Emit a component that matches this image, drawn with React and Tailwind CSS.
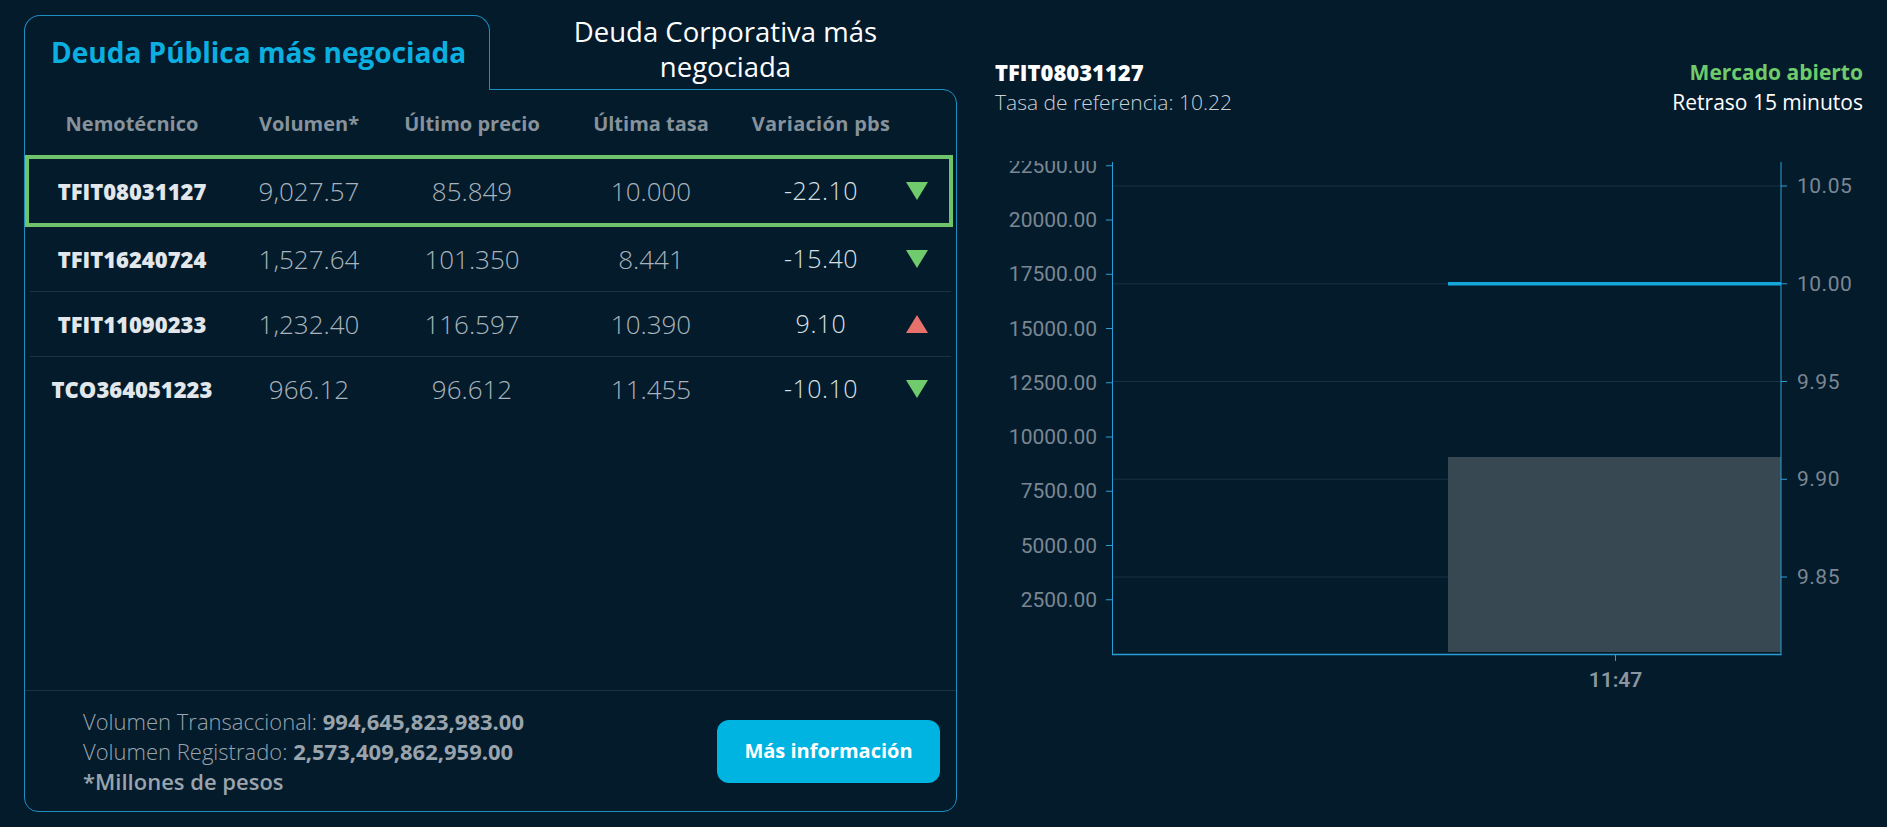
import React from "react";

const rows = [
  { code: "TFIT08031127", vol: "9,027.57", price: "85.849", rate: "10.000", bps: "-22.10", up: false },
  { code: "TFIT16240724", vol: "1,527.64", price: "101.350", rate: "8.441", bps: "-15.40", up: false },
  { code: "TFIT11090233", vol: "1,232.40", price: "116.597", rate: "10.390", bps: "9.10", up: true },
  { code: "TCO364051223", vol: "966.12", price: "96.612", rate: "11.455", bps: "-10.10", up: false },
];

const cols = "grid grid-cols-[214px_140px_186px_172px_168px_24px] items-center text-center";

function Triangle({ up }) {
  return (
    <svg width="24" height="20" viewBox="0 0 24 20">
      {up ? (
        <polygon points="12,1 23,19 1,19" fill="#e8716c" />
      ) : (
        <polygon points="1,1 23,1 12,19" fill="#6fcb6b" />
      )}
    </svg>
  );
}

function Row({ row, selected }) {
  return (
    <div
      className={
        "mr-[3px] border-4 " +
        (selected ? "h-[72px] border-[#6fc46b]" : "h-[64px] border-transparent")
      }
    >
      <div className={cols + " h-full -ml-[4px] whitespace-nowrap"}>
        <div className="font-extrabold text-[22px] text-[#e2e7eb]">{row.code}</div>
        <div className="font-light text-[26px] text-[#a9b3bb]">{row.vol}</div>
        <div className="font-light text-[26px] text-[#a9b3bb]">{row.price}</div>
        <div className="font-light text-[26px] text-[#a9b3bb]">{row.rate}</div>
        <div className="font-light text-[25px] text-[#d9e0e5] tracking-[0.5px]">{row.bps}</div>
        <div className="flex justify-center">
          <Triangle up={row.up} />
        </div>
      </div>
    </div>
  );
}

function Chart() {
  const left = [
    [22500, 4.75],
    [20000, 59],
    [17500, 113.25],
    [15000, 167.5],
    [12500, 221.75],
    [10000, 276],
    [7500, 330.25],
    [5000, 384.5],
    [2500, 438.75],
  ];
  const right = ["10.05", "10.00", "9.95", "9.90", "9.85"];
  return (
    <svg width="868" height="540" viewBox="0 0 868 540" className="block">
      {right.map((_, i) => (
        <line
          key={"g" + i}
          x1="117.5"
          x2="786"
          y1={25 + 97.75 * i}
          y2={25 + 97.75 * i}
          stroke="#173042"
          strokeWidth="1"
        />
      ))}
      <rect x="453" y="296" width="333" height="195" fill="#374852" />
      <line x1="453" x2="786" y1="122.75" y2="122.75" stroke="#15a6db" strokeWidth="3.5" />
      <line x1="117.5" x2="117.5" y1="1" y2="493.5" stroke="#2a9fd6" strokeWidth="1" />
      <line x1="786" x2="786" y1="1" y2="493.5" stroke="#2a9fd6" strokeWidth="1" />
      <line x1="117" x2="786.5" y1="493.5" y2="493.5" stroke="#2a9fd6" strokeWidth="1.5" />
      {left.map(([v, y]) => (
        <g key={v}>
          <line x1="111" x2="117.5" y1={y} y2={y} stroke="#2a9fd6" strokeWidth="1" />
          <text
            x="102"
            y={y}
            textAnchor="end"
            dominantBaseline="central"
            fill="#7a8792"
            fontSize="21"
            fontFamily="Roboto, sans-serif"
          >
            {v.toFixed(2)}
          </text>
        </g>
      ))}
      {right.map((t, i) => (
        <g key={t}>
          <line x1="786" x2="792" y1={25 + 97.75 * i} y2={25 + 97.75 * i} stroke="#2a9fd6" strokeWidth="1" />
          <text
            x="802"
            y={25 + 97.75 * i}
            dominantBaseline="central"
            fill="#7a8792"
            fontSize="21"
            letterSpacing="0.5"
            fontFamily="Roboto, sans-serif"
          >
            {t}
          </text>
        </g>
      ))}
      <line x1="620.5" x2="620.5" y1="493.5" y2="500" stroke="#2a9fd6" strokeWidth="1" />
      <text
        x="620.5"
        y="519"
        textAnchor="middle"
        dominantBaseline="central"
        fill="#8b969f"
        fontSize="21"
        fontWeight="600"
        fontFamily="Roboto, sans-serif"
      >
        11:47
      </text>
    </svg>
  );
}

export default function App() {
  return (
    <div
      className="min-h-[827px] bg-[#041b2c] flex pt-[15px] pl-[24px]"
      style={{ fontFamily: "'Open Sans', 'Noto Sans', sans-serif" }}
    >
      <div className="w-[933px] flex flex-col">
        <div className="flex h-[74px]">
          <div className="relative z-10 -mb-px w-[466px] h-[75px] bg-[#041b2c] border border-b-0 border-[#1e8fc0] rounded-t-[16px] flex items-center pl-[26px] pb-[3px]">
            <span className="font-bold text-[28px] text-[#0cb0e0] whitespace-nowrap">
              Deuda Pública más negociada
            </span>
          </div>
          <div className="flex-1 flex items-center justify-center text-center text-[27.5px] leading-[35px] text-white pb-[6px] pl-[4px]">
            <span>
              Deuda Corporativa más
              <br />
              negociada
            </span>
          </div>
        </div>
        <div className="h-[723px] border border-[#1e8fc0] rounded-b-[14px] rounded-tr-[14px] flex flex-col">
          <div className="flex-1">
            <div className={cols + " h-[65px] pt-[3px] font-bold text-[20px] text-[#87929b] whitespace-nowrap"}>
              <div>Nemotécnico</div>
              <div>Volumen*</div>
              <div>Último precio</div>
              <div>Última tasa</div>
              <div className="tracking-[0.3px]">Variación pbs</div>
              <div />
            </div>
            {rows.map((r, i) => (
              <React.Fragment key={r.code}>
                {i > 1 && <div className="mx-[5px] h-px bg-[#1b3244]" />}
                <Row row={r} selected={i === 0} />
              </React.Fragment>
            ))}
          </div>
          <div className="h-[121px] border-t border-[#1b3244] flex items-center justify-between pl-[58px] pr-[16px]">
            <div className="text-[22px] leading-[30px] text-[#99a4ad] whitespace-nowrap">
              <div>
                <span className="font-light">Volumen Transaccional: </span>
                <span className="font-bold">994,645,823,983.00</span>
              </div>
              <div>
                <span className="font-light">Volumen Registrado: </span>
                <span className="font-bold">2,573,409,862,959.00</span>
              </div>
              <div className="font-semibold">*Millones de pesos</div>
            </div>
            <button className="w-[223px] h-[63px] rounded-[12px] bg-[#00b4e1] text-white font-bold text-[20px]">
              Más información
            </button>
          </div>
        </div>
      </div>
      <div className="flex-1 pl-[38px] pr-[24px] pt-[42px]">
        <div className="flex justify-between text-[21px] leading-[30px] whitespace-nowrap">
          <div>
            <div className="font-extrabold text-[22px] text-white">TFIT08031127</div>
            <div className="font-light text-[#c8d0d6]">Tasa de referencia: 10.22</div>
          </div>
          <div className="text-right">
            <div className="font-bold text-[#6fcb6b]">Mercado abierto</div>
            <div className="text-white">Retraso 15 minutos</div>
          </div>
        </div>
        <div className="mt-[44px]">
          <Chart />
        </div>
      </div>
    </div>
  );
}
